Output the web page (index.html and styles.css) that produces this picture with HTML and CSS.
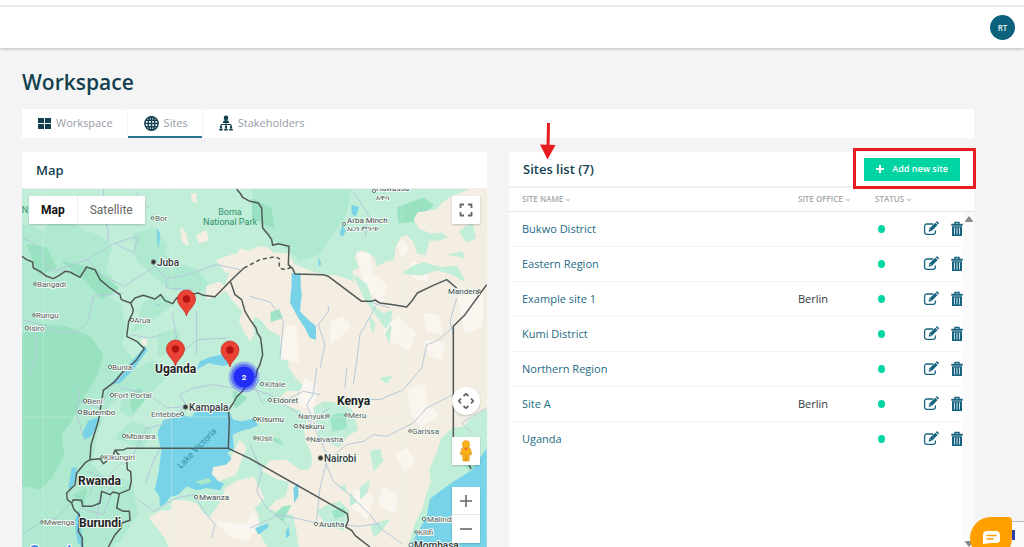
FILE: index.html
```html
<!DOCTYPE html>
<html lang="en">
<head>
<meta charset="utf-8">
<title>Workspace – Sites</title>
<link rel="stylesheet" href="styles.css">
</head>
<body>
<svg class="sprite" aria-hidden="true">
  <symbol id="edit" viewBox="0 0 16 16"><path d="M10 3H3.800A2.200 2.200 0 0 0 1.600 5.200v6a2.200 2.200 0 0 0 2.200 2.200h6.400a2.200 2.200 0 0 0 2.200-2.200V9.500" fill="none" stroke="currentColor" stroke-width="1.300"/><path d="M5.600 10.800l.7-3.200 5.900-5.900 2.400 2.400-5.900 5.900z" fill="currentColor"/><path d="M7 8.300l1.200 1.200" stroke="#fff" stroke-width=".8"/><path d="M12.800 1.200l.7-.7q.5-.4 1 0l1.200 1.200q.5.500 0 1l-.6.700z" fill="currentColor"/></symbol>
  <symbol id="trash" viewBox="0 0 12 16"><path d="M4 3V1.500h4V3" fill="none" stroke="currentColor" stroke-width="1.400"/><path d="M.3 2.700h11.400v2H.3zM1 5.200h10V15H1z" fill="currentColor"/><path d="M3.500 6.500v7M6 6.500v7M8.500 6.500v7" stroke="#c4dde6"/></symbol>
  <symbol id="caret" viewBox="0 0 6 4"><path d="M1 .8l2 2 2-2" fill="none" stroke="currentColor"/></symbol>
</svg>
<div class="app">
  <div class="browser-edge"></div>
  <header class="topbar"><button class="avatar">RT</button></header>
  <main class="main">
    <h1 class="title">Workspace</h1>
    <nav class="tabs">
      <a class="tab" href="#workspace"><svg width="13" height="13" viewBox="0 0 13 13"><path d="M0 1h6v5H0zM7 1h6v5H7zM0 7h6v5H0zM7 7h6v5H7z" fill="currentColor"/></svg><span>Workspace</span></a>
      <a class="tab active" href="#sites"><svg width="15" height="15" viewBox="0 0 15 15"><g fill="none" stroke="currentColor" stroke-width="1.400"><circle cx="7.500" cy="7.500" r="6.700"/><ellipse cx="7.500" cy="7.500" rx="3.300" ry="6.700"/><path d="M7.500 1v13M1 7.500h13M2 4.200h11M2 10.800h11"/></g></svg><span>Sites</span></a>
      <a class="tab" href="#stakeholders"><svg width="14" height="16" viewBox="0 0 14 16"><g fill="currentColor"><circle cx="7" cy="2.900" r="2.300"/><path d="M3.800 8c0-2 1.500-3 3.200-3s3.200 1 3.200 3z"/><circle cx="2" cy="12" r="1.200"/><circle cx="7" cy="12" r="1.200"/><circle cx="12" cy="12" r="1.200"/><path d="M0 15.500c0-3 4-3 4 0zM5 15.500c0-3 4-3 4 0zM10 15.500c0-3 4-3 4 0z"/></g><path d="M7 8v3M2 11V9.500h10V11" fill="none" stroke="currentColor"/></svg><span>Stakeholders</span></a>
    </nav>
    <div class="panels">
      <section class="panel">
        <h2 class="panel-head">Map</h2>
        <div class="map">
          <svg class="map-art" viewBox="22 189 465 358" preserveAspectRatio="xMidYMin slice" role="img" aria-label="Map of East Africa">
            <rect x="22" y="189" width="465" height="358" fill="#c1eed9"/>
            <g transform="translate(20 188) scale(.33333)">
              <g fill="#afe9cf" stroke="#afe9cf" stroke-width="12" stroke-linejoin="round">
                <path d="M0 110L70 135 95 112 150 104 190 132 245 150 270 182 252 240 286 296 262 330 296 350 312 420 300 470 336 520 290 560 326 610 270 640 230 720 210 830 240 860 260 930 230 1000 286 1090H0z"/>
                <path d="M345 140L400 125 436 170 430 200 480 232 536 252 526 288 460 306 402 258 352 210zM375 345l56-18 26 20-48 33-66 46zM420 440l50-10 10 40-60 30zM320 560l80-36 56 20-66 66-58 74-26-20zM700 0H990L972 80 926 148 896 194 840 212 800 174 750 146 722 100z"/>
                <path d="M480 240l66 30 18 26-66 18zM275 866l55 20 18 90-54 84h-74l-28-56zM335 706l52 18-20 52-74-28z"/>
              </g>
              <g fill="#98e2c1" stroke="#98e2c1" stroke-width="8" stroke-linejoin="round">
                <path d="M0 450L60 410 140 420 210 450 246 500 230 560 180 640 150 700 120 740 130 800 90 870 60 900 0 890zM132 224l86 20 74 56-46 28-60-64zM24 172l54 10 26 56-46 18zM332 620l26-18 18 28-36 36zM1135 60l75-27 26 18-56 46-40 5zM700 36l50 28 10 52-60-26z"/>
                <path d="M163 922l34-17-8 44zM642 612l34 18-28 26z"/>
              </g>
              <g fill="#f3eee1" stroke="#f3eee1" stroke-width="6" stroke-linejoin="round">
                <path transform="translate(690 0)" d="M-30 185L0 192 25 178 50 180 70 196 115 200 130 230 165 245 190 255 225 262 270 268 315 285 310 250 330 240 318 205 335 190 350 195 372 212 380 240 410 222 435 220 440 178 455 150 470 145 488 165 500 200 530 205 540 162 570 160 600 150 575 130 545 134 510 120 495 95 505 75 560 68 580 45 600 30 640 15 670 0H730V660L700 664 660 690 640 712 605 718 570 750 555 800 535 840 540 880 525 920 515 960 490 1010 470 1080H150L140 1020 130 977 100 975 60 960 80 940 110 930 120 880 80 870 40 848 60 820 110 818 150 850 175 848 190 830 185 790 170 760 165 720 180 690 150 665 100 647 95 630 110 612 145 612 170 597 140 570 120 540 115 510 100 500 90 440 60 425 40 400 15 380 5 400 10 440 0 455-15 430-30 400-20 370-55 330-75 300-55 240z"/>
                <path d="M390 990L420 972 455 968 460 940 500 940 530 950 550 980 570 990 600 950 620 900 655 880 700 870 730 930 700 960 715 985 700 1010 740 1080H450l-15-35zM570 850l30-20 30-10 30-60 16 20-31 80-60 20zM485 122l12 18 5 30-14-12zM532 142l26-12 4 26-26 6zM517 20l10-3v26l-11-5zM562 297l36-13 23 18-33 23-28 5zM592 217l56-18 18 28-46 26zM368 457l10-3v14h-10z"/>
              </g>
              <g fill="#faf6ef" stroke="#faf6ef" stroke-width="10" stroke-linejoin="round">
                <path d="M1015 195l30 8 8 52 42 38-10 45-48-42zM1148 160l12 22-15 20-6-35zM1094 424l40-34 20 22 28 24-16 46-50-26zM1215 380l38 6 8 48-38-8zM936 405l30-16 22 26-52 48zM805 415l20 6 8 96-46-8 8-50zM1166 606l45-14 8 58 30 30-46 34-26-40zM1010 910l46 16-16 62-46-36zM856 576l30 18-8 72-40-22zM596 1004l84 12 20-34 14 24-34 50-50-16zM1178 226l46 16-8 36-36-14zM1318 330l66-24v104l-46 22zM1130 800l30-14 20 30-24 30zM1220 460l50 10-10 40-30-10zM1090 900l40 20-10 50-40-20z"/>
              </g>
              <g fill="#c1eed9" stroke="#c1eed9" stroke-width="4" stroke-linejoin="round">
                <path d="M1150 255l30-20 30-10 50 15 50-5 24 44-44-24-40-10-46 16zM1002 262l38 28 20 66 54 38-16 26-60-82zM1092 377l24-8-8 32zM1050 390l15 20-8 24zM1098 438l14-26-4 50zM1320 130l36-26 10 46-28 10zM1290 200l36-8 5 16zM700 500l40-45 24 30-20 50zM882 660l28-18 28 3 56 18 18 62-30 18-26 34-56-24zM1052 792l26-8 10 34-26 28zM1022 900l26-21-8 34-18 18zM892 970l30-18 38-10 26 28-16 54-48-10zM992 917l16 26-16 8zM1054 1012l52-16-18 26-26 24zM1083 572l34-8-18 20zM960 900l14-10 4 20z"/>
              </g>
              <g fill="#9ee4c6"><path d="M930 690l20-15 25 2 6 44-44 10zM935 970l35-13 10 23-36 13zM760 980l30-26 24-2-24 46zM735 744l45 8 10 20-25-8zM1330 830l40 5-20 15zM752 372l26-8 10 26-36 13z"/></g>
              <g fill="#78d3e8">
                <path d="M430 697L455 690 490 682 515 686 530 667 560 660 590 672 625 664 640 695 665 700 700 692 715 712 690 722 660 730 638 740 642 780 622 795 635 812 618 830 580 837 575 857 595 880 612 888 600 907 560 900 530 907 500 895 475 920 450 927 437 945 420 957 418 925 404 905 416 850 424 790 412 735z"/>
                <path d="M815 255h27v35l3 30-5 50 30 30 18 15v40l-18-5-15-30-20-30-25-45 5-55zM994 52l23 5-10 30-12-10zM967 110l10 20-10 17-8-10zM896 205l8 25-8 5zM375 475l8 10-43 60-40 40-30 5 60-65zM185 740l20-42 30-10-5 30-15 25-20 12zM145 900l10-60 15-2-5 40-15 30zM163 1000l15-35 5 60 10 60-20-20zM540 520l30-13 60-12-15 20 20 10-25 10-45-10-35 20zM410 120l10 15-3 45-5-15zM406 355l25-10-20 5zM820 900l15-15 0 40-12 20zM798 1030l8-16 3 30-12 6zM705 1020l40-14 0 12-30 22z"/>
                <path d="M1400 780L1355 847 1290 887 1230 932 1220 987 1190 1037 1170 1077H1400z"/>
              </g>
              <path d="M525 882l40-12 10 12-30 8z" fill="#a9e7c9"/>
              <g fill="none" stroke="#b5c8da" stroke-width="3" stroke-linejoin="round">
                <path d="M6 150Q60 165 75 215T130 240L200 215 235 195 285 165 335 150 355 145 340 195 310 180 285 165M250 0L252 80 265 130 263 165M345 10l40 50M200 215L240 255 310 295 360 265 405 235M405 235L438 270 485 265 590 230 660 245M438 270L440 300 520 305M6 395L60 410 130 435 175 430 205 400 220 325 310 315M330 440L390 450 425 440M455 370L470 450 480 500M530 370V500M480 500L530 455 620 450M45 430L50 500 25 560M6 1040L60 1005 110 990 155 940M340 525L270 600 240 660 180 640M300 600L380 615 440 660 510 655M495 655L430 710 380 720 335 810 310 830M180 600L170 680 195 760M375 890L400 820 420 780M350 930L400 970 470 930 520 920M520 920L560 980 585 1010 575 1050M300 880L240 920 230 1000M180 960L250 980 280 900M500 655L480 620 520 600 580 590 640 600M200 850l60 20 50-50M230 860l-20 60M240 1000l50 20M640 560l60 30 30 60"/>
                <path d="M690 325L750 342 790 400 780 510M925 355L925 370 895 410 915 470 900 540M1070 350L1020 440 1010 520 1000 590M1060 345L1110 360M1300 415Q1260 460 1220 470L1205 540 1150 605 1080 635 1020 632M1310 330L1290 400 1300 440M980 540L975 600M890 540L880 620 860 650 885 710M920 820L980 770 1030 760 1060 740 1100 745 1180 705 1220 660 1260 640 1300 620M915 820L940 880 1000 930 1050 980 1080 1020 1150 1070M920 820L900 900 890 1000M690 600L750 620 870 700 900 750 920 800M690 1020L780 980 890 1005 960 1010 1020 1015 1080 1005M1400 660L1325 705 1360 740M1000 10L1045 80 1035 150M690 770L725 850 710 910 740 960 800 1010M870 700l60-40M790 640l60-30 50 10"/>
              </g>
              <path d="M70 0v1077M455 0v1077M1145 0v1077M6 687h1390" fill="none" stroke="#e3f2ea" stroke-width="2" opacity=".5"/>
              <g fill="none" stroke="#505958" stroke-width="4.500" stroke-linejoin="round">
                <path d="M6 205L20 215 38 222 40 240 60 250 80 265 100 272 118 262 135 250 150 252 180 268 200 237 225 245 240 275 270 300 300 320 304 335 332 345 345 330 370 322 405 333 422 320 435 338 458 347 470 330 500 322 535 315 550 322 585 326 640 270 672 240"/>
                <path d="M632 282L645 320 665 335 675 370 690 395 708 420 712 435 722 450 728 500 720 530 712 545 708 565 690 577 670 607 650 627 640 645 625 667 628 697 625 781"/>
                <path d="M332 345L340 365 338 375 326 400 320 445 340 455 350 460 373 482 350 515 340 525 310 550 285 580 250 607 245 640 235 700 213 770 210 815"/>
                <path d="M210 815L240 812 250 827 265 815 280 800 285 787 312 785 320 781 625 781 690 812 982 977 985 997 977 1017 995 1027 1005 1042 1050 1077"/>
                <path d="M210 815L195 825 170 855 165 890 140 915 142 935 155 945 162 965 178 980 175 1030 187 1050 187 1077M155 945L160 935 185 937 188 955 215 955 240 945 245 910 270 920 280 912 298 917M285 787L300 805 320 815 322 845 332 850 334 880 328 905 298 917 290 960 310 970 328 970 330 997 305 1005 303 1020 285 1040 265 1077"/>
                <path d="M650 3L662 18 668 28 690 40 715 45 725 60 728 120 745 140 755 155 758 172 775 167 807 175 805 230 818 242 825 258 910 260 925 265 1025 340 1055 340 1065 336 1080 345 1120 350 1160 357 1175 340 1192 315 1240 292 1280 275 1310 300"/>
                <path d="M1400 290L1335 380 1300 415V760L1345 825 1353 843"/>
                <path d="M672 240L720 215 765 206 778 212 778 240 795 245 815 237" stroke-dasharray="12 9"/>
              </g>
            </g>
            <g class="places">
              <text x="155" y="221">Bor</text><text x="37" y="287">Bangadi</text><text x="36" y="318">Rungu</text><text x="29" y="331">Isiro</text><text x="134" y="323">Arua</text><text x="112" y="370">Bunia</text><text x="114" y="398">Fort Portal</text><text x="87" y="404">Beni</text><text x="151" y="417">Entebbe</text><text x="126" y="439">Mbarara</text><text x="104" y="460">Kikungiri</text><text x="44" y="525">Mwenga</text><text x="265" y="387">Kitale</text><text x="298" y="419">Nanyuki</text><text x="348" y="418">Meru</text><text x="257" y="441">Kisii</text><text x="310" y="442">Naivasha</text><text x="412" y="434">Garissa</text><text x="427" y="522">Malindi</text><text x="418" y="535">Kilifi</text>
            </g>
            <g class="places towns">
              <text x="347" y="223">Arba Minch</text><text class="local" x="347" y="231">አርባ ምንጭ</text><text x="376" y="191">Hawassa</text><text class="local" x="376" y="200">አዋሳ</text><text x="448" y="294">Mandera</text><text x="83" y="415">Butembo</text><text x="199" y="500">Mwanza</text><text x="273" y="403">Eldoret</text><text x="257" y="422">Kisumu</text><text x="299" y="429">Nakuru</text><text x="319" y="527">Arusha</text>
            </g>
            <g class="places cities"><text x="157" y="266">Juba</text><text x="189" y="411">Kampala</text><text x="324" y="462">Nairobi</text><text x="414" y="549">Mombasa</text></g>
            <g class="places countries"><text x="155" y="373">Uganda</text><text x="337" y="405">Kenya</text><text x="78" y="485">Rwanda</text><text x="79" y="527">Burundi</text></g>
            <g class="park"><text x="230" y="215">Boma</text><text x="230" y="225">National Park</text><text x="25" y="213">N</text></g>
            <text class="lake" transform="translate(181 469) rotate(-46)">Lake Victoria</text>
            <text class="brand" x="29" y="557">Google</text>
            <g fill="#fff" stroke="#59605f" stroke-width=".9"><circle cx="152.500" cy="218" r="1.300"/><circle cx="35" cy="284" r="1.300"/><circle cx="34" cy="315" r="1.300"/><circle cx="27" cy="328" r="1.600"/><circle cx="132" cy="320" r="1.600"/><circle cx="110" cy="367" r="1.600"/><circle cx="112" cy="395" r="1.600"/><circle cx="85" cy="401" r="1.600"/><circle cx="80" cy="412" r="1.600"/><circle cx="182" cy="414" r="1.600"/><circle cx="124" cy="436" r="1.600"/><circle cx="102" cy="457" r="1.300"/><circle cx="42" cy="522" r="1.300"/><circle cx="262" cy="384" r="1.600"/><circle cx="270" cy="400" r="1.600"/><circle cx="255" cy="419" r="1.600"/><circle cx="255" cy="438" r="1.300"/><circle cx="296" cy="426" r="1.600"/><circle cx="328" cy="416" r="1.300"/><circle cx="346" cy="415" r="1.300"/><circle cx="308" cy="439" r="1.300"/><circle cx="410" cy="431" r="1.300"/><circle cx="424" cy="519" r="1.600"/><circle cx="416" cy="532" r="1.300"/><circle cx="316" cy="524" r="1.600"/><circle cx="196" cy="497" r="1.600"/><circle cx="344" cy="224" r="1.600"/><circle cx="374" cy="191" r="1.600"/><circle cx="411" cy="545" r="2"/><circle cx="479" cy="291" r="1.300"/></g>
            <g fill="#333" stroke="#777"><circle cx="153.500" cy="262" r="2.300"/><circle cx="185.500" cy="407" r="2.300"/><circle cx="320.500" cy="458" r="2.300"/></g>
            <defs><g id="pin"><path d="M0 0C-1-6-9-10-9-17A9 9 0 0 1 9-17C9-10 1-6 0 0z" fill="#ea4335" stroke="#c5221f" stroke-width=".7"/><circle cy="-17" r="3.700" fill="#b31412"/></g></defs>
            <use href="#pin" x="186.500" y="316"/><use href="#pin" x="175.500" y="366"/><use href="#pin" x="230" y="367"/>
            <circle cx="244" cy="377" r="15.500" fill="#2a36ff" opacity=".3"/><circle cx="244" cy="377" r="13" fill="#2a36ff" opacity=".5"/><circle cx="244" cy="377" r="10.500" fill="#222df5"/>
            <text class="cluster" x="244" y="380">2</text>
          </svg>
          <div class="map-type"><button class="type on">Map</button><button class="type">Satellite</button></div>
          <button class="ctl full" aria-label="Toggle fullscreen"><svg width="14" height="14" viewBox="0 0 14 14"><path d="M1.500 5V1.500H5M9 1.500h3.500V5M12.500 9v3.500H9M5 12.500H1.500V9" fill="none" stroke="#666" stroke-width="1.800"/></svg></button>
          <div class="map-tools">
            <button class="ctl round" aria-label="Map camera controls"><svg width="16" height="16" viewBox="0 0 16 16"><path d="M5.500 3L8 .8 10.500 3M5.500 13L8 15.200l2.500-2.200M3 5.500L.8 8 3 10.500M13 5.500L15.200 8 13 10.500" fill="none" stroke="#666" stroke-width="1.800"/></svg></button>
            <button class="ctl" aria-label="Street View"><svg width="14" height="22" viewBox="0 0 14 22"><path d="M3 8q4-2 8 0l1.800 6-1.300 1-1-2-.5 8H4l-.5-8-1 2-1.300-1z" fill="#fbb319" stroke="#cf8b13" stroke-width=".6"/><circle cx="7" cy="4.300" r="3.700" fill="#fbb319" stroke="#dc9415" stroke-width=".6"/><path d="M5 8h4l-2 3z" fill="#ef6c25"/><path d="M7 14v7" stroke="#cf8b13"/></svg></button>
            <div class="zoom"><button aria-label="Zoom in"><svg width="12" height="12" viewBox="0 0 12 12"><path d="M0 6h12M6 0v12" stroke="#666" stroke-width="1.600"/></svg></button><button aria-label="Zoom out"><svg width="12" height="12" viewBox="0 0 12 12"><path d="M0 6h12" stroke="#666" stroke-width="1.600"/></svg></button></div>
          </div>
        </div>
      </section>
      <section class="panel sites">
        <div class="panel-head list-head"><h2>Sites list (7)</h2><button class="add"><svg width="8" height="8" viewBox="0 0 8 8"><path d="M0 4h8M4 0v8" stroke="#fff" stroke-width="2"/></svg>Add new site</button></div>
        <div class="list">
          <table>
            <colgroup><col><col class="c-office"><col class="c-status"><col class="c-edit"><col class="c-trash"></colgroup>
            <thead><tr><th>SITE NAME <svg class="caret"><use href="#caret"/></svg></th><th>SITE OFFICE <svg class="caret"><use href="#caret"/></svg></th><th>STATUS <svg class="caret"><use href="#caret"/></svg></th><th></th><th></th></tr></thead>
            <tbody>
              <tr><td><a href="#s1">Bukwo District</a></td><td></td><td><i class="dot"></i></td><td><button aria-label="Edit"><svg class="edit"><use href="#edit"/></svg></button></td><td><button aria-label="Delete"><svg class="trash"><use href="#trash"/></svg></button></td></tr>
              <tr><td><a href="#s2">Eastern Region</a></td><td></td><td><i class="dot"></i></td><td><button aria-label="Edit"><svg class="edit"><use href="#edit"/></svg></button></td><td><button aria-label="Delete"><svg class="trash"><use href="#trash"/></svg></button></td></tr>
              <tr><td><a href="#s3">Example site 1</a></td><td>Berlin</td><td><i class="dot"></i></td><td><button aria-label="Edit"><svg class="edit"><use href="#edit"/></svg></button></td><td><button aria-label="Delete"><svg class="trash"><use href="#trash"/></svg></button></td></tr>
              <tr><td><a href="#s4">Kumi District</a></td><td></td><td><i class="dot"></i></td><td><button aria-label="Edit"><svg class="edit"><use href="#edit"/></svg></button></td><td><button aria-label="Delete"><svg class="trash"><use href="#trash"/></svg></button></td></tr>
              <tr><td><a href="#s5">Northern Region</a></td><td></td><td><i class="dot"></i></td><td><button aria-label="Edit"><svg class="edit"><use href="#edit"/></svg></button></td><td><button aria-label="Delete"><svg class="trash"><use href="#trash"/></svg></button></td></tr>
              <tr><td><a href="#s6">Site A</a></td><td>Berlin</td><td><i class="dot"></i></td><td><button aria-label="Edit"><svg class="edit"><use href="#edit"/></svg></button></td><td><button aria-label="Delete"><svg class="trash"><use href="#trash"/></svg></button></td></tr>
              <tr><td><a href="#s7">Uganda</a></td><td></td><td><i class="dot"></i></td><td><button aria-label="Edit"><svg class="edit"><use href="#edit"/></svg></button></td><td><button aria-label="Delete"><svg class="trash"><use href="#trash"/></svg></button></td></tr>
            </tbody>
          </table>
          <div class="scrollbar"><svg width="8" height="6" viewBox="0 0 8 6"><path d="M4 0l4 5q0 1-1 1H1Q0 6 0 5z" fill="#8a8a8a"/></svg><svg width="8" height="6" viewBox="0 0 8 6"><path d="M4 6l4-5q0-1-1-1H1Q0 0 0 1z" fill="#8a8a8a"/></svg></div>
        </div>
        <div class="highlight"></div>
        <svg class="arrow" width="16" height="38" viewBox="0 0 16 38"><path d="M8.500 1L8 25" stroke="#e81c1f" stroke-width="3"/><path d="M0 22.500L15.500 23 7.500 37.500z" fill="#e81c1f"/></svg>
      </section>
    </div>
  </main>
  <div class="corner"></div>
  <button class="chat" aria-label="Open chat"><svg width="17" height="14" viewBox="0 0 17 14"><path d="M4 0h9q4 0 4 4v5q0 3-4 3H8l-8 1V4q0-4 4-4z" fill="#fff"/><path d="M4 4.500h9M4 8h6" stroke="#ffa000" stroke-width="1.500" stroke-linecap="round"/></svg></button>
</div>
</body>
</html>
```

FILE: styles.css
```css
* { box-sizing: border-box; }
body { margin: 0; background: #f4f4f4; color: #12404f; font: 11px/16px "Open Sans", "Noto Sans", sans-serif; }
h1, h2 { margin: 0; font-weight: 600; }
button { margin: 0; padding: 0; border: 0; background: none; color: inherit; font: inherit; cursor: pointer; }
a { color: inherit; text-decoration: none; }
svg { display: block; }
.sprite { position: absolute; width: 0; height: 0; }
.app { display: flex; flex-direction: column; height: 100vh; overflow: hidden; position: relative; }

.browser-edge { height: 7px; flex: none; background: #fff; border-bottom: 2px solid #f1f1f2; }
.topbar { display: flex; align-items: center; justify-content: flex-end; flex: none; height: 41px; padding-right: 9px; background: #fff; box-shadow: 0 1px 3px #bbb; }
.avatar { width: 25px; height: 25px; border-radius: 50%; background: #0b607c; color: #e4f0f4; font-size: 8px; font-weight: 600; }

.main { display: flex; flex: 1; flex-direction: column; min-height: 0; padding: 18px 50px 0 22px; }
.title { font-size: 21px; line-height: 32px; }
.tabs { display: flex; flex: none; height: 29px; margin: 11px 0 14px; background: #fff; }
.tab { display: flex; align-items: center; gap: 5px; padding: 0 14px 1px 16px; border-right: 1px solid #f4f4f4; color: #12404f; }
.tab:last-child { border-right: 0; }
.tab span { color: #989ba8; }
.tab.active { box-shadow: inset 0 -2px #287690; }

.panels { display: grid; flex: 1; grid-template-columns: minmax(0, 1fr) minmax(0, 1fr); gap: 22px; min-height: 0; }
.panel { display: flex; flex-direction: column; min-width: 0; min-height: 0; background: #fff; position: relative; }
.panel-head { display: flex; align-items: center; flex: none; height: 37px; padding: 0 14px; border-bottom: 1px solid #eee; font-size: 13px; line-height: 20px; }
.list-head { justify-content: space-between; height: 36px; border-bottom: 2px solid #f2f2f2; }
.list-head h2 { font-size: 13px; }
.add { display: flex; align-items: center; justify-content: center; gap: 8px; height: 23px; padding: 0 12px; background: #00d4a2; color: #fff; font-size: 9px; font-weight: 600; }

.map { flex: 1; min-height: 0; overflow: hidden; position: relative; }
.map-art { width: 100%; height: 100%; font-family: Roboto, sans-serif; }
.places { fill: #5b6061; stroke: #effaf5; stroke-width: 2px; stroke-linejoin: round; paint-order: stroke; font-size: 8px; }
.towns { fill: #45494a; }
.local { font-size: 7px; }
.cities { fill: #37393a; font-size: 10px; font-weight: 500; }
.countries { fill: #222; font-size: 12px; font-weight: 700; }
.park { fill: #2f8e68; font-size: 9px; text-anchor: middle; }
.lake { fill: #3190a8; font-size: 9px; }
.brand { fill: #4285f4; stroke: #fff; stroke-width: 2px; paint-order: stroke; font-size: 16px; font-weight: 500; }
.cluster { fill: #fff; font-size: 8px; font-weight: 700; text-anchor: middle; }
.map-type { display: flex; position: absolute; top: 7px; left: 7px; background: #fff; box-shadow: 0 1px 2px #0003; color: #666; font: 12px/28px Roboto, sans-serif; }
.type { padding: 0 12px; }
.type.on { border-right: 1px solid #eee; color: #111; font-weight: 700; }
.ctl { display: flex; align-items: center; justify-content: center; width: 28px; height: 28px; background: #fff; box-shadow: 0 1px 2px #0003; }
.full { position: absolute; top: 7px; right: 7px; }
.map-tools { display: flex; flex-direction: column; gap: 22px; position: absolute; right: 7px; bottom: 4px; }
.round { border-radius: 50%; }
.zoom { width: 28px; background: #fff; box-shadow: 0 1px 2px #0003; }
.zoom button { display: flex; align-items: center; justify-content: center; width: 28px; height: 28px; }
.zoom button:first-child { border-bottom: 1px solid #e8e8e8; }

.list { flex: 1; min-height: 0; position: relative; }
table { width: 100%; table-layout: fixed; border-collapse: collapse; }
.c-office { width: 77px; }
.c-status { width: 48px; }
.c-edit { width: 28px; }
.c-trash { width: 23px; }
th { height: 23px; padding: 0; border-bottom: 1px solid #e4e4e4; color: #a5a8aa; font-size: 8px; line-height: 12px; font-weight: 600; text-align: left; white-space: nowrap; }
td { height: 35px; padding: 0; border-bottom: 1px solid #f5f5f5; color: #33383a; }
th:first-child, td:first-child { padding-left: 13px; }
td a { color: #236b84; }
tr:last-child td { border-bottom: 0; }
td button { display: block; color: #17637f; }
.caret { display: inline-block; width: 6px; height: 4px; vertical-align: middle; }
.dot { display: block; width: 7px; height: 8px; margin-left: 3px; border-radius: 50%; background: #00d6a3; }
.edit { width: 16px; height: 16px; }
.trash { width: 12px; height: 16px; }
.scrollbar { display: flex; flex-direction: column; align-items: center; justify-content: space-between; position: absolute; top: 24px; right: 0; bottom: 0; width: 11px; padding: 4px 0 0; background: #fafafa; }
.highlight { position: absolute; top: -4px; right: -2px; width: 123px; height: 41px; border: 3px solid #e81c22; }
.arrow { position: absolute; top: -30px; left: 31px; }

.corner { position: absolute; right: 0; bottom: 0; width: 12px; height: 26px; border-top: 1px solid #bbb; background: linear-gradient(#2c3fa8, #2c3fa8) 0 8px / 3px 10px no-repeat #fafafa; }
.chat { display: flex; align-items: center; justify-content: center; position: absolute; right: 12px; bottom: -12px; width: 42px; height: 42px; border-radius: 22px 4px 22px 22px; background: #ffa000; }
```
